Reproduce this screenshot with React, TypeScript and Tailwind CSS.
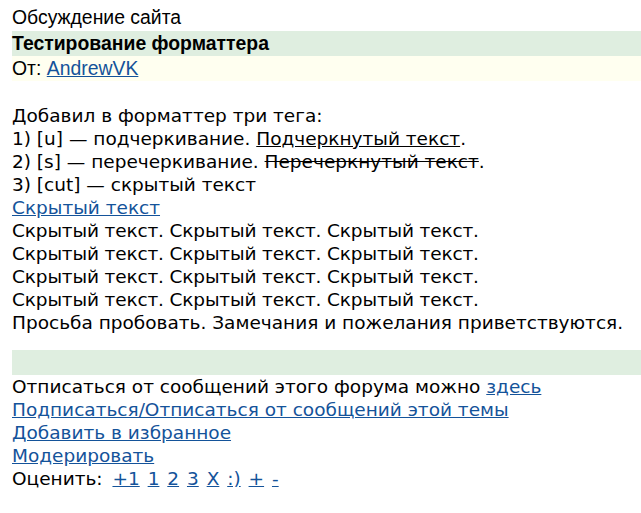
import React from "react";

const link = "text-[#14539a] underline";

export default function App() {
  return (
    <div className="min-h-[513px] bg-white pl-3 text-black">
      <div className="text-[19.4px] font-['Liberation_Sans',Arial,sans-serif]">
        <div className="h-[31px] pt-[6px] leading-[23px]">Обсуждение сайта</div>
        <div className="h-[25px] bg-[#dfeee0] pt-[1px] font-bold leading-[23px]">
          Тестирование форматтера
        </div>
        <div className="h-[25px] bg-[#fffff0] pt-[1px] leading-[23px]">
          От: <a className={link} href="#">AndrewVK</a>
        </div>
      </div>
      <div className="font-['DejaVu_Sans',Verdana,sans-serif] text-[18.5px] leading-[23px]">
        <div>&nbsp;</div>
        <div>Добавил в форматтер три тега:</div>
        <div>
          1) [u] — подчеркивание. <span className="underline">Подчеркнутый текст</span>.
        </div>
        <div>
          2) [s] — перечеркивание. <span className="line-through">Перечеркнутый текст</span>.
        </div>
        <div>3) [cut] — скрытый текст</div>
        <div>
          <a className={link} href="#">Скрытый текст</a>
        </div>
        <div className="[letter-spacing:-0.15px]">Скрытый текст. Скрытый текст. Скрытый текст.</div>
        <div className="[letter-spacing:-0.15px]">Скрытый текст. Скрытый текст. Скрытый текст.</div>
        <div className="[letter-spacing:-0.15px]">Скрытый текст. Скрытый текст. Скрытый текст.</div>
        <div className="[letter-spacing:-0.15px]">Скрытый текст. Скрытый текст. Скрытый текст.</div>
        <div>Просьба пробовать. Замечания и пожелания приветствуются.</div>
        <div className="mt-[16px] h-[25px] bg-[#dfeee0]" />
        <div>
          Отписаться от сообщений этого форума можно <a className={link} href="#">здесь</a>
        </div>
        <div>
          <a className={link} href="#">Подписаться/Отписаться от сообщений этой темы</a>
        </div>
        <div>
          <a className={link} href="#">Добавить в избранное</a>
        </div>
        <div>
          <a className={link} href="#">Модерировать</a>
        </div>
        <div className="[word-spacing:2px]">
          <span className="[word-spacing:4px]">Оценить: </span>
          <a className={link} href="#">+1</a>{" "}
          <a className={link} href="#">1</a>{" "}
          <a className={link} href="#">2</a>{" "}
          <a className={link} href="#">3</a>{" "}
          <a className={link} href="#">X</a>{" "}
          <a className={link} href="#">:)</a>{" "}
          <a className={link} href="#">+</a>{" "}
          <a className={link} href="#">-</a>
        </div>
      </div>
    </div>
  );
}
